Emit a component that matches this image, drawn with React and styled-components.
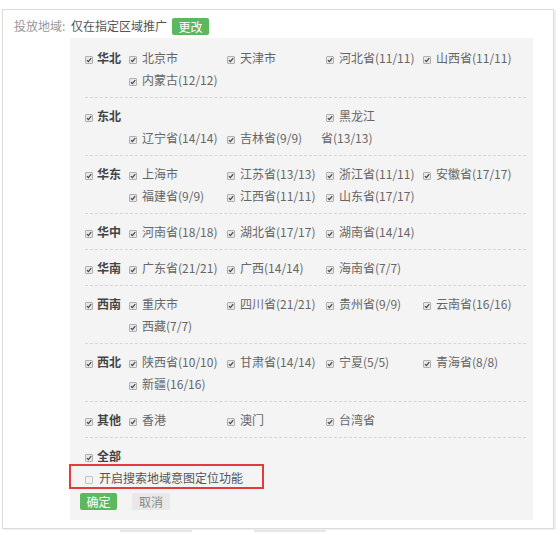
import React from 'react';
import styled, { createGlobalStyle } from 'styled-components';

const Global = createGlobalStyle`
  html, body { margin: 0; padding: 0; background: #fff; }
  body { font-family: "Noto Sans CJK SC", "Noto Sans", sans-serif; font-size: 12px; color: #666; }
`;

const Page = styled.div`
  padding: 9px 0 0 2px;
  width: 560px;
  box-sizing: border-box;
`;

const Box = styled.div`
  width: 552px;
  box-sizing: border-box;
  border: 1px solid #dcdcdc;
  box-shadow: 2px 1px 0 #efefef;
  padding: 6px 20px 8px 11px;
  background: #fff;
`;

const Header = styled.div`
  display: flex;
  align-items: center;
  height: 20px;
  line-height: 20px;
`;

const FieldLabel = styled.span`
  width: 57px;
  flex: none;
  color: #999;
  white-space: nowrap;
`;

const FieldValue = styled.span`
  color: #555;
  white-space: nowrap;
`;

const Button = styled.button`
  height: 17px;
  padding: 0;
  width: ${p => p.$w || 37}px;
  border: none;
  border-radius: 2px;
  font-family: inherit;
  font-size: 12px;
  line-height: 17px;
  cursor: pointer;
  background: ${p => (p.$primary ? '#5bb85f' : '#e8e8e8')};
  color: ${p => (p.$primary ? '#fff' : '#888')};
  margin-left: ${p => p.$ml || 0}px;
`;

const Panel = styled.div`
  margin: 2px 0 0 56px;
  background: #f4f4f4;
  padding: 2px 7px 10px 15px;
`;

const RegionRow = styled.div`
  display: flex;
  padding: 7px 0 6px;
  border-bottom: 1px dashed #d6d6d6;
`;

const RegionLabel = styled.span`
  width: 44px;
  flex: none;
  line-height: 22px;
  font-weight: bold;
  color: #444;
  white-space: nowrap;
`;

const ProvinceGrid = styled.div`
  display: grid;
  grid-template-columns: 98px 99px 97px 98px;
  grid-auto-rows: 22px;
  line-height: 22px;
`;

const Province = styled.span`
  white-space: nowrap;
  color: #666;
  grid-column: ${p => p.$col || 'auto'};
  grid-row: ${p => p.$row || 'auto'};
`;

const WrapProvince = styled.span`
  color: #666;
  grid-column: ${p => p.$col};
  grid-row: ${p => p.$row} / span 2;
  margin-left: -5px;
  text-indent: 5px;
  white-space: normal;
`;

const CheckBox = styled.span`
  display: inline-block;
  box-sizing: border-box;
  width: 8px;
  height: 8px;
  border: 1px solid ${p => (p.$on ? '#b0b0b0' : '#c4c4c4')};
  background: ${p => (p.$on ? '#e8e8e8' : '#f2f2f2')};
  border-radius: 1px;
  margin-right: ${p => p.$mr || 5}px;
  vertical-align: -1px;
  text-indent: 0;
  position: relative;
  & > svg { position: absolute; left: 0; top: 0; display: block; }
`;

const Check = ({ on = true, mr }) => (
  <CheckBox $on={on} $mr={mr}>
    {on && (
      <svg width="6" height="6" viewBox="0 0 6 6">
        <path d="M0.9 3.1 L2.4 4.6 L5.2 1.2" fill="none" stroke="#444" strokeWidth="1.2" />
      </svg>
    )}
  </CheckBox>
);

const PlainRow = styled.div`
  padding: 7px 0 0;
  line-height: 22px;
`;

const Highlight = styled.div`
  margin: -3px 0 0 -16px;
  width: 195px;
  box-sizing: border-box;
  border: 2px solid #e23b3b;
  padding: 3px 0 0 14px;
  line-height: 18px;
  height: 25px;
  color: #555;
  white-space: nowrap;
`;

const Actions = styled.div`
  display: flex;
  margin: 4px 0 0 -5px;
`;

const Footer = styled.div`
  display: flex;
  margin-top: 1px;
`;

const FootBar = styled.span`
  height: 2px;
  width: ${p => p.$w}px;
  margin-left: ${p => p.$ml}px;
  background: #e6e6e6;
`;

const regions = [
  { name: '华北', items: ['北京市', '天津市', '河北省(11/11)', '山西省(11/11)', '内蒙古(12/12)'] },
  {
    name: '东北',
    custom: [
      { wrap: true, name: '黑龙江', rest: '省(13/13)', col: 3, row: 1 },
      { name: '辽宁省(14/14)', col: 1, row: 2 },
      { name: '吉林省(9/9)', col: 2, row: 2 },
    ],
  },
  { name: '华东', items: ['上海市', '江苏省(13/13)', '浙江省(11/11)', '安徽省(17/17)', '福建省(9/9)', '江西省(11/11)', '山东省(17/17)'] },
  { name: '华中', items: ['河南省(18/18)', '湖北省(17/17)', '湖南省(14/14)'] },
  { name: '华南', items: ['广东省(21/21)', '广西(14/14)', '海南省(7/7)'] },
  { name: '西南', items: ['重庆市', '四川省(21/21)', '贵州省(9/9)', '云南省(16/16)', '西藏(7/7)'] },
  { name: '西北', items: ['陕西省(10/10)', '甘肃省(14/14)', '宁夏(5/5)', '青海省(8/8)', '新疆(16/16)'] },
  { name: '其他', items: ['香港', '澳门', '台湾省'] },
];

export default function App() {
  return (
    <>
      <Global />
      <Page>
        <Box>
          <Header>
            <FieldLabel>投放地域:</FieldLabel>
            <FieldValue>仅在指定区域推广</FieldValue>
            <Button $primary $ml={5}>更改</Button>
          </Header>
          <Panel>
            {regions.map(r => (
              <RegionRow key={r.name}>
                <RegionLabel>
                  <Check mr={4} />
                  {r.name}
                </RegionLabel>
                <ProvinceGrid>
                  {r.items &&
                    r.items.map(p => (
                      <Province key={p}>
                        <Check />
                        {p}
                      </Province>
                    ))}
                  {r.custom &&
                    r.custom.map(p =>
                      p.wrap ? (
                        <WrapProvince key={p.name} $col={p.col} $row={p.row}>
                          <Check />
                          {p.name}
                          <br />
                          {p.rest}
                        </WrapProvince>
                      ) : (
                        <Province key={p.name} $col={p.col} $row={p.row}>
                          <Check />
                          {p.name}
                        </Province>
                      )
                    )}
                </ProvinceGrid>
              </RegionRow>
            ))}
            <PlainRow>
              <RegionLabel>
                <Check mr={4} />
                全部
              </RegionLabel>
            </PlainRow>
            <Highlight>
              <Check on={false} mr={6} />
              开启搜索地域意图定位功能
            </Highlight>
            <Actions>
              <Button $primary>确定</Button>
              <Button $ml={15} $w={38}>取消</Button>
            </Actions>
          </Panel>
        </Box>
        <Footer>
          <FootBar $ml={118} $w={72} />
          <FootBar $ml={62} $w={72} />
        </Footer>
      </Page>
    </>
  );
}
